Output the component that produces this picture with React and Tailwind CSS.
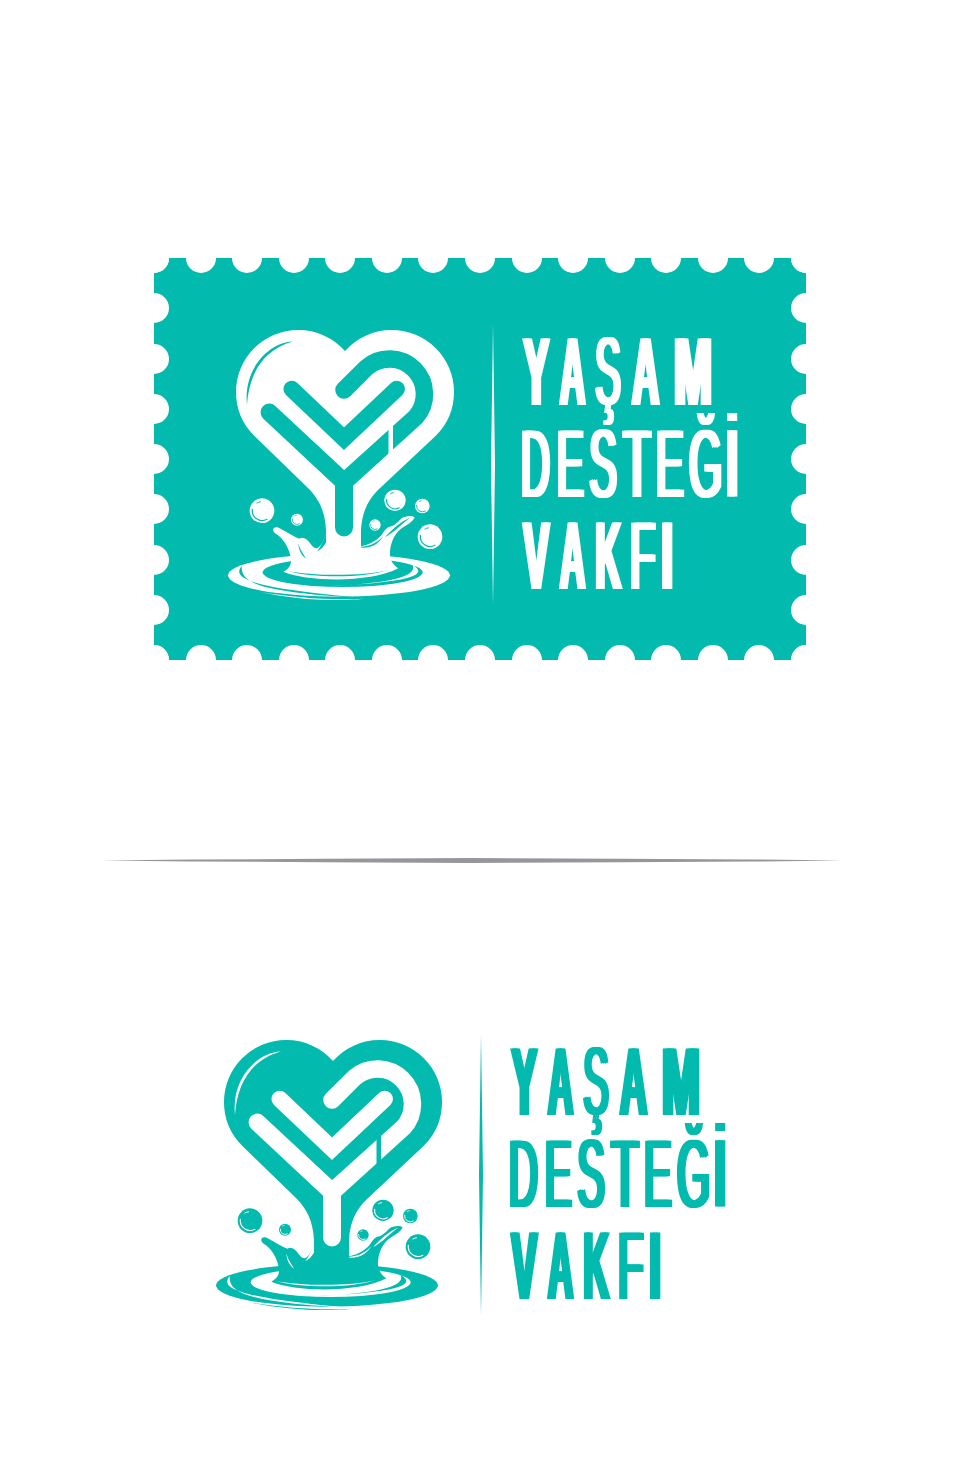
const TEAL = '#02BAAD'

const bubbles = [
  [126, 572, 37],
  [525, 541, 32],
  [607, 558, 22],
  [630, 650, 37],
  [231, 599, 18],
  [465, 615, 17],
]

// [char, ink left, ink right (em, Liberation Sans), target width, gap after, bold]
const lines = [
  [
    ['Y', 0.01, 0.66, 29, 7, true],
    ['A', 0, 0.72, 29, 8, true],
    ['Ş', 0.045, 0.62, 26, 9, false],
    ['A', 0, 0.72, 31, 14, true],
    ['M', 0.07, 0.76, 36, 0, true],
  ],
  [
    ['D', 0.08, 0.67, 28, 8],
    ['E', 0.08, 0.62, 26, 5],
    ['S', 0.045, 0.62, 28, 5],
    ['T', 0.02, 0.59, 30, 5],
    ['E', 0.08, 0.62, 27, 5],
    ['Ğ', 0.05, 0.72, 33, 5],
    ['İ', 0.09, 0.18, 10, 0],
  ],
  [
    ['V', 0.01, 0.66, 29, 7, true],
    ['A', 0, 0.72, 29, 9, true],
    ['K', 0.07, 0.72, 27, 8, true],
    ['F', 0.08, 0.57, 25, 6],
    ['I', 0.09, 0.18, 10, 0],
  ],
]

const FONT_PX = 96
const SHADOW_PX = 5

function Bubble({ x, y, r, fg, bg }) {
  return (
    <g>
      <circle cx={x} cy={y} r={r} fill={fg} />
      <path
        d={`M${x - r * 0.78} ${y - r * 0.1} A${r * 0.8} ${r * 0.8} 0 0 0 ${x + r * 0.4} ${y + r * 0.7}`}
        fill="none"
        stroke={bg}
        strokeWidth={r * 0.06 + 1.5}
        strokeLinecap="round"
      />
      <path
        d={`M${x - r * 0.42} ${y - r * 0.62} A${r * 0.75} ${r * 0.75} 0 0 1 ${x - r * 0.12} ${y - r * 0.72}`}
        fill="none"
        stroke={bg}
        strokeWidth={r * 0.05 + 1}
        strokeLinecap="round"
      />
    </g>
  )
}

function Mark({ fg, bg }) {
  return (
    <svg viewBox="220 320 250 290" className="h-[290px] w-[250px] shrink-0">
      {/* splash is traced at 3x, hence the scale */}
      <g transform="translate(220 320) scale(0.33333)">
        <ellipse cx="357" cy="766" rx="333" ry="64" fill={fg} />
        <ellipse cx="368" cy="757" rx="240" ry="44" fill={bg} />
        <path d="M65 738C38 772 70 802 430 834C120 816 62 790 65 738Z" fill={bg} />
        <path d="M578 735C625 762 590 790 268 800C480 795 596 775 578 735Z" fill={fg} />
        <path d="M120 816C220 838 340 846 432 836C330 841 230 834 120 816Z" fill={fg} />
        <path
          d="M318 600L328 585C323 630 315 665 296 682C290 688 280 684 272 672C262 658 250 648 238 656C220 650 195 632 172 622C160 620 155 630 165 640C190 655 205 680 212 710C216 730 210 745 190 755C260 785 450 790 535 745C520 735 508 720 510 695C512 665 525 640 545 625C560 615 580 605 584 592C575 585 555 588 545 595C530 610 520 620 508 620C495 625 490 640 480 650C460 670 430 680 410 680C418 668 424 650 423 630L423 600Z"
          fill={fg}
        />
        <path d="M331 588C335 632 322 682 292 693C310 672 322 630 331 588Z" fill={bg} />
        <path d="M235 670C240 690 250 700 258 716C244 706 236 690 235 670Z" fill={bg} />
        <path d="M412 681C440 682 470 672 490 648C478 670 450 690 412 681Z" fill={bg} />
        <path d="M495 652C515 630 540 606 572 592C545 612 522 638 495 652Z" fill={bg} />
        <path d="M200 752C280 775 430 775 505 750C430 769 280 769 200 752Z" fill={bg} />
        {bubbles.map(([x, y, r]) => (
          <Bubble key={`${x}-${y}`} x={x} y={y} r={r} fg={fg} bg={bg} />
        ))}
      </g>

      {/* heart with the stem running down into the splash */}
      <path
        d="M345 351A62 62 0 0 0 298 330A62 62 0 0 0 236 392A62 62 0 0 0 254.2 435.8L308 488C318 498 325 510 326 530L326 550L361 550L361 530C362 512 368 500 378 490L435.8 435.8A62 62 0 0 0 454 392A62 62 0 0 0 392 330A62 62 0 0 0 345 351Z"
        fill={fg}
      />
      <path d="M293 341.5C270 342 243 368 247 405C249 375 262 350 293 341.5Z" fill={bg} />

      {/* channels */}
      <g fill="none" stroke={bg} strokeLinecap="round" strokeMiterlimit="4">
        <path d="M291.7 389L344 438.7L396.7 389" strokeWidth="16.5" />
        <path d="M269.3 412.3L344 482L415.7 417.2A35 35 0 0 0 366.3 367.8L344 390" strokeWidth="17.5" />
        <path d="M344 482L344 527.5" strokeWidth="18" />
      </g>
      <rect x="388.5" y="426" width="4.5" height="28" fill={fg} />
    </svg>
  )
}

function Letter({ ch, left, right, width, gap, bold }) {
  // squeeze each glyph so its ink, with the shadow that fattens the stems, fills the target width
  const scale = width / ((right - left) * FONT_PX + SHADOW_PX * 2)
  const shift = -(left * FONT_PX - SHADOW_PX) * scale
  return (
    <span className="block h-[92px] shrink-0" style={{ width, marginRight: gap }}>
      <span
        className={`block origin-top-left whitespace-nowrap ${bold ? 'font-bold' : 'font-normal'}`}
        style={{ transform: `translateX(${shift}px) scaleX(${scale})` }}
      >
        {ch}
      </span>
    </span>
  )
}

function Wordmark({ color }) {
  return (
    <div
      className={`ml-[27px] pt-[6px] font-['Liberation_Sans',sans-serif] text-[96px] leading-[92px] [text-shadow:5px_0_currentColor,-5px_0_currentColor] ${color}`}
    >
      {lines.map((letters, i) => (
        <div key={i} className="flex">
          {letters.map(([ch, left, right, width, gap, bold], j) => (
            <Letter key={j} ch={ch} left={left} right={right} width={width} gap={gap} bold={bold} />
          ))}
        </div>
      ))}
    </div>
  )
}

function Lockup({ fg, bg, textColor, dividerColor }) {
  return (
    <div className="flex items-start">
      <Mark fg={fg} bg={bg} />
      <div
        className={`ml-[21px] mt-[4px] h-[282px] w-[4px] shrink-0 [clip-path:polygon(50%_0,100%_50%,50%_100%,0_50%)] ${dividerColor}`}
      />
      <Wordmark color={textColor} />
    </div>
  )
}

function Scallops({ className, count }) {
  return (
    <div className={`absolute flex justify-between ${className}`}>
      {Array.from({ length: count }, (_, i) => (
        <div key={i} className="h-[30px] w-[30px] shrink-0 rounded-full bg-white" />
      ))}
    </div>
  )
}

export default function App() {
  return (
    <div className="h-[1463px] w-[957px] overflow-hidden bg-white pt-[258px]">
      <div className="relative ml-[154px] h-[402px] w-[652px] overflow-hidden bg-[#02BAAD] pl-[66px] pt-[62px]">
        <Scallops count={15} className="-left-[15px] -right-[15px] -top-[15px]" />
        <Scallops count={15} className="-bottom-[15px] -left-[15px] -right-[15px]" />
        <Scallops count={9} className="-bottom-[15px] -left-[15px] -top-[15px] flex-col" />
        <Scallops count={9} className="-bottom-[15px] -right-[15px] -top-[15px] flex-col" />
        <div className="relative">
          <Lockup fg="#ffffff" bg={TEAL} textColor="text-white" dividerColor="bg-white" />
        </div>
      </div>

      <div className="ml-[101px] mt-[198px] h-[5px] w-[742px] bg-[#98969a] [clip-path:polygon(0_50%,12%_30%,30%_15%,50%_0,70%_15%,88%_30%,100%_50%,88%_70%,70%_85%,50%_100%,30%_85%,12%_70%)]" />

      <div className="ml-[208px] mt-[167px]">
        <Lockup fg={TEAL} bg="#ffffff" textColor="text-[#02BAAD]" dividerColor="bg-[#02BAAD]" />
      </div>
    </div>
  )
}
